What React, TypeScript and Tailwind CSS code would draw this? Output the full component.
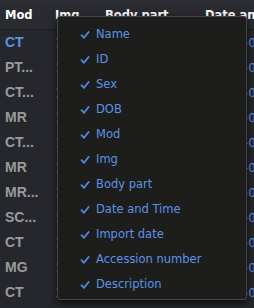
import React from "react";

const rows = [
  { mod: "CT", blue: true },
  { mod: "PT...", blue: false },
  { mod: "CT...", blue: false },
  { mod: "MR", blue: false },
  { mod: "CT...", blue: false },
  { mod: "MR", blue: false },
  { mod: "MR...", blue: false },
  { mod: "SC...", blue: false },
  { mod: "CT", blue: false },
  { mod: "MG", blue: false },
  { mod: "CT", blue: false },
];

const items = [
  "Name",
  "ID",
  "Sex",
  "DOB",
  "Mod",
  "Img",
  "Body part",
  "Date and Time",
  "Import date",
  "Accession number",
  "Description",
];

function Check() {
  return (
    <svg width="10" height="10" viewBox="0 0 10 10" className="shrink-0">
      <path d="M1.5 5.2 L4 7.8 L8.6 2" fill="none" stroke="#4f8be3" strokeWidth="1.8" strokeLinecap="round" strokeLinejoin="round" />
    </svg>
  );
}

export default function App() {
  return (
    <div className="relative w-[254px] h-[308px] overflow-hidden bg-[#26272c]" style={{ fontFamily: "'DejaVu Sans', sans-serif" }}>
      <div className="flex h-[30px] items-center border-t-[3px] border-t-[#2e2f35] border-b border-b-[#1d1e22] bg-[#2a2b31] text-[11.5px] font-bold text-white whitespace-nowrap">
        <div className="w-[55px] shrink-0 pl-[5px]">Mod</div>
        <div className="w-[50px] shrink-0">Img</div>
        <div className="w-[100px] shrink-0">Body part</div>
        <div className="shrink-0">Date and Time</div>
      </div>
      {rows.map((r, i) => (
        <div key={i} className="flex h-[25px] items-center whitespace-nowrap">
          <div
            className={`w-[55px] shrink-0 pl-[5px] text-[14px] font-bold ${r.blue ? "text-[#5b93e6]" : "text-[#9a9a9c]"}`}
            style={{ fontFamily: "'Liberation Sans', Arial, sans-serif" }}
          >
            {r.mod}
          </div>
          <div className={`w-[189px] shrink-0 text-[12px] ${r.blue ? "text-[#5b93e6]" : "text-[#8a8a8c]"}`}>1</div>
          <div className="flex shrink-0 items-center text-[12px]">
            <span className="text-[#8a8a8c]">-</span>
            <span className="text-[#5b93e6]">0</span>
          </div>
        </div>
      ))}

      <div className="absolute left-[57px] top-[16px] w-[190px] h-[284px] rounded-[3px] border border-[#444548] bg-[#1d1e1c] shadow-[0_3px_8px_rgba(0,0,0,0.7)] pt-[5px]">
        {items.map((it) => (
          <div key={it} className="flex h-[25px] items-center pl-[22px] gap-[6px] text-[11.5px] text-[#5b93e6] whitespace-nowrap">
            <Check />
            <span>{it}</span>
          </div>
        ))}
      </div>
    </div>
  );
}
